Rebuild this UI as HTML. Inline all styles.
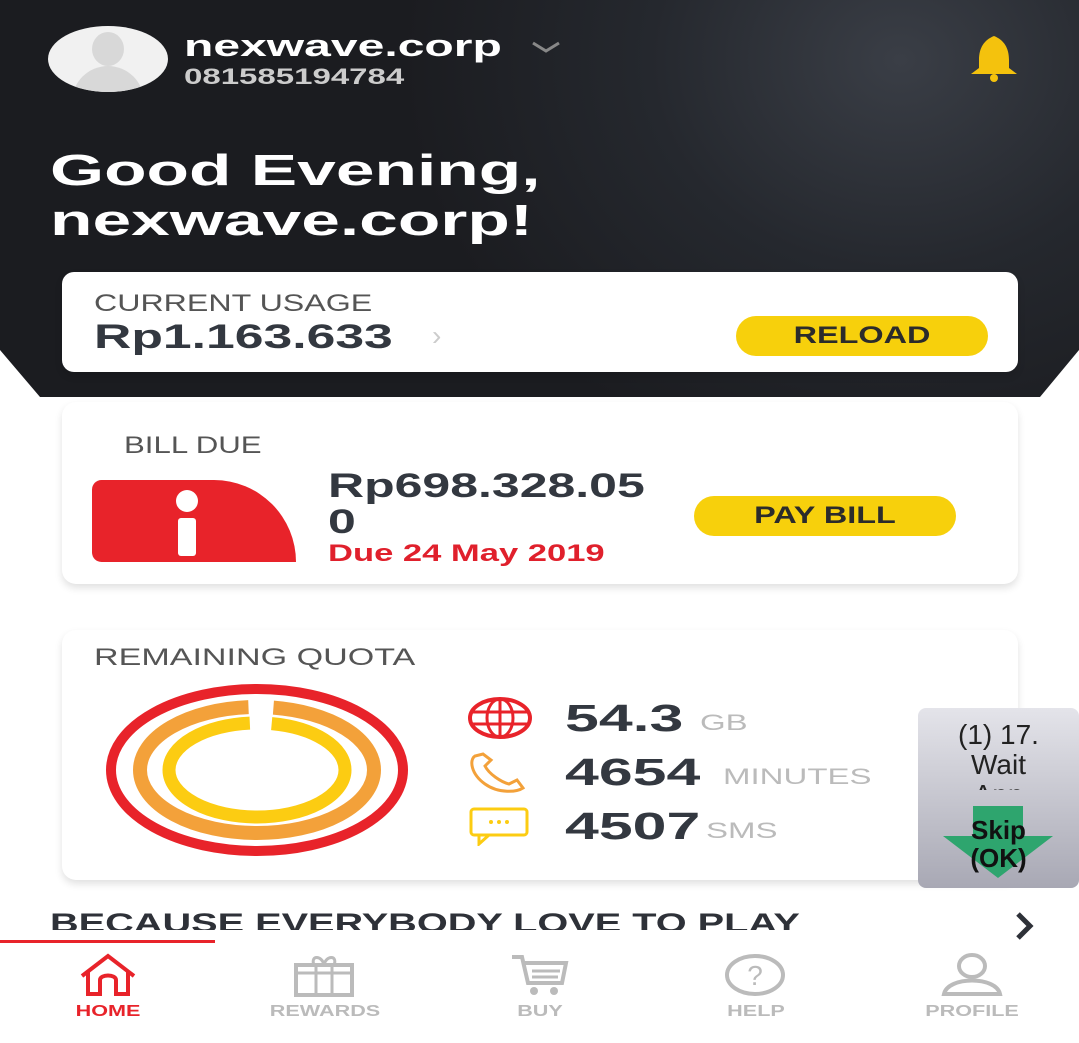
<!DOCTYPE html>
<html><head><meta charset="utf-8"><style>
*{margin:0;padding:0;box-sizing:border-box}
body{width:1079px;height:1043px;background:#fff;font-family:"Liberation Sans",sans-serif;position:relative;overflow:hidden}
.hdr{position:absolute;left:0;top:0;width:1079px;height:397px;background:radial-gradient(ellipse 500px 420px at 900px 60px,#3a3e46 0%,#25282e 50%,#1b1c20 100%);clip-path:polygon(0 0,1079px 0,1079px 350px,1040px 397px,40px 397px,0 350px)}
.abs{position:absolute}
.w{transform:scaleX(1.3);transform-origin:left center;white-space:nowrap}
.wc{transform:scaleX(1.35);transform-origin:center;white-space:nowrap}
.card{position:absolute;background:#fff;border-radius:14px;box-shadow:0 4px 8px rgba(0,0,0,.12)}
.btn{position:absolute;background:#f7d00c;border-radius:22px;font-weight:bold;color:#2b2b2b;font-size:24px;text-align:center}
.lbl{color:#555;font-size:24px}
.big{font-weight:bold;color:#333840}
.unit{font-size:22px;color:#bbb;transform:scaleX(1.5)}
.nav{position:absolute;top:1003px;font-size:16px;font-weight:bold;color:#bbb;text-align:center;width:140px}
</style></head><body>
<div class="hdr"></div>
<div class="abs" style="left:48px;top:26px;width:120px;height:66px;border-radius:50%;background:#f1f1f1;overflow:hidden">
<div class="abs" style="left:44px;top:6px;width:32px;height:34px;border-radius:50%;background:#d8d8d8"></div>
<div class="abs" style="left:24px;top:40px;width:72px;height:40px;border-radius:36px 36px 0 0;background:#d8d8d8"></div></div>
<div class="abs w" style="left:184px;top:28px;color:#fff;font-size:31px;font-weight:bold;transform:scaleX(1.55)">nexwave.corp</div>
<svg class="abs" style="left:530px;top:40px" width="32" height="14"><path d="M3 3 L16 11 L29 3" stroke="#888" stroke-width="3" fill="none"/></svg>
<div class="abs w" style="left:184px;top:64px;color:#ccc;font-size:22px;font-weight:bold;transform:scaleX(1.5)">081585194784</div>
<svg class="abs" style="left:963px;top:34px" width="62" height="48"><path d="M31 2 C21 6 16 14 16 26 L16 34 L8 40 L54 40 L46 34 L46 26 C46 14 41 6 31 2Z" fill="#f4c20d"/><circle cx="31" cy="44" r="4" fill="#f4c20d"/></svg>
<div class="abs w" style="left:50px;top:146px;color:#fff;font-size:44px;font-weight:bold;line-height:50px;transform:scaleX(1.58)">Good Evening,<br>nexwave.corp!</div>
<div class="card" style="left:62px;top:272px;width:956px;height:100px;border-radius:12px">
<div class="lbl abs w" style="left:32px;top:18px;transform:scaleX(1.34)">CURRENT USAGE</div>
<div class="big abs w" style="left:32px;top:46px;font-size:34px;transform:scaleX(1.52)">Rp1.163.633</div>
<div class="abs" style="left:370px;top:48px;color:#ccc;font-size:28px">›</div>
<div class="btn" style="left:674px;top:44px;width:252px;height:40px;line-height:40px"><div class="wc">RELOAD</div></div>
</div>
<div class="card" style="left:62px;top:402px;width:956px;height:182px">
<div class="lbl abs w" style="left:62px;top:30px">BILL DUE</div>
<div class="abs" style="left:30px;top:78px;width:204px;height:82px;background:#e8232a;border-radius:14px 120px 0 14px"></div>
<div class="abs" style="left:114px;top:88px;width:22px;height:22px;border-radius:50%;background:#fff"></div>
<div class="abs" style="left:116px;top:116px;width:18px;height:38px;border-radius:3px;background:#fff"></div>
<div class="big abs w" style="left:266px;top:66px;font-size:34px;line-height:36px;transform:scaleX(1.47)">Rp698.328.05<br>0</div>
<div class="abs w" style="left:266px;top:138px;color:#e0202c;font-size:24px;font-weight:bold;transform:scaleX(1.44)">Due 24 May 2019</div>
<div class="btn" style="left:632px;top:94px;width:262px;height:40px;line-height:40px"><div class="wc">PAY BILL</div></div>
</div>
<div class="card" style="left:62px;top:630px;width:956px;height:250px">
<div class="lbl abs w" style="left:32px;top:14px;transform:scaleX(1.42)">REMAINING QUOTA</div>
</div>
<svg class="abs" style="left:104px;top:684px" width="306" height="172">
<ellipse cx="153" cy="86" rx="146" ry="81" fill="none" stroke="#e8232a" stroke-width="10"/>
<ellipse cx="153" cy="86" rx="117" ry="63" fill="none" stroke="#f3a13a" stroke-width="14" stroke-dasharray="425 25 200"/>
<ellipse cx="153" cy="86" rx="88" ry="47" fill="none" stroke="#fccc12" stroke-width="13" stroke-dasharray="318 22 200"/>
</svg>
<svg class="abs" style="left:467px;top:696px" width="66" height="44"><ellipse cx="33" cy="22" rx="30" ry="19" fill="none" stroke="#e8232a" stroke-width="4"/><ellipse cx="33" cy="22" rx="13" ry="19" fill="none" stroke="#e8232a" stroke-width="3"/><line x1="33" y1="3" x2="33" y2="41" stroke="#e8232a" stroke-width="3"/><line x1="4" y1="16" x2="62" y2="16" stroke="#e8232a" stroke-width="3"/><line x1="4" y1="28" x2="62" y2="28" stroke="#e8232a" stroke-width="3"/></svg>
<svg class="abs" style="left:467px;top:752px" width="64" height="42"><path d="M8 4 C2 8 4 22 18 32 C32 42 50 40 56 36 L50 28 L42 32 C34 30 22 22 18 14 L24 8 L16 2Z" fill="none" stroke="#f3a13a" stroke-width="3"/></svg>
<svg class="abs" style="left:467px;top:806px" width="64" height="40"><rect x="4" y="3" width="56" height="26" rx="3" fill="none" stroke="#fccc12" stroke-width="3"/><path d="M12 29 L12 38 L22 29" fill="none" stroke="#fccc12" stroke-width="3"/><circle cx="24" cy="16" r="2" fill="#fccc12"/><circle cx="32" cy="16" r="2" fill="#fccc12"/><circle cx="40" cy="16" r="2" fill="#fccc12"/></svg>
<div class="big abs w" style="left:565px;top:698px;font-size:38px;transform:scaleX(1.6)">54.3</div>
<div class="abs w unit" style="left:700px;top:710px">GB</div>
<div class="big abs w" style="left:565px;top:752px;font-size:38px;transform:scaleX(1.6)">4654</div>
<div class="abs w unit" style="left:723px;top:764px">MINUTES</div>
<div class="big abs w" style="left:565px;top:806px;font-size:38px;transform:scaleX(1.6)">4507</div>
<div class="abs w unit" style="left:706px;top:818px">SMS</div>
<div class="abs" style="left:918px;top:708px;width:161px;height:180px;border-radius:8px;background:linear-gradient(#e4e4ea,#a8a8b4);overflow:hidden">
<svg class="abs" style="left:20px;top:98px" width="120" height="74"><path d="M35 0 L85 0 L85 30 L115 30 L60 72 L5 30 L35 30Z" fill="#2ea56e"/></svg>
<div class="abs" style="left:0;top:12px;width:161px;text-align:center;font-size:28px;line-height:30px;color:#222;height:70px;overflow:hidden">(1) 17.<br>Wait<br>App</div>
<div class="abs" style="left:0;top:108px;width:161px;text-align:center;font-size:26px;line-height:28px;font-weight:bold;color:#111">Skip<br>(OK)</div>
</div>
<div class="abs w" style="left:50px;top:908px;font-size:27px;font-weight:bold;color:#2e3138;transform:scaleX(1.47)">BECAUSE EVERYBODY LOVE TO PLAY</div>
<div class="abs" style="left:0;top:930px;width:1079px;height:12px;background:#fff"></div>
<svg class="abs" style="left:1012px;top:910px" width="24" height="32"><path d="M6 4 L18 16 L6 28" stroke="#2e3138" stroke-width="5" fill="none"/></svg>
<div class="abs" style="left:0;top:940px;width:215px;height:3px;background:#e8232a"></div>
<svg class="abs" style="left:76px;top:952px" width="64" height="46"><path d="M6 24 L32 4 L58 24 M12 20 L12 42 L24 42 L24 28 C24 22 40 22 40 28 L40 42 L52 42 L52 20" stroke="#e8232a" stroke-width="4" fill="none"/></svg>
<svg class="abs" style="left:292px;top:953px" width="64" height="44"><rect x="4" y="12" width="56" height="30" fill="none" stroke="#bbb" stroke-width="4"/><line x1="4" y1="20" x2="60" y2="20" stroke="#bbb" stroke-width="3"/><line x1="24" y1="12" x2="24" y2="42" stroke="#bbb" stroke-width="3"/><line x1="40" y1="12" x2="40" y2="42" stroke="#bbb" stroke-width="3"/><path d="M22 12 C18 2 30 2 32 12 C34 2 46 2 42 12" fill="none" stroke="#bbb" stroke-width="3"/></svg>
<svg class="abs" style="left:510px;top:953px" width="60" height="44"><path d="M2 4 L12 4 L18 30 L52 30 L56 10 L14 10" fill="none" stroke="#bbb" stroke-width="4"/><line x1="22" y1="18" x2="50" y2="18" stroke="#bbb" stroke-width="3"/><line x1="22" y1="24" x2="48" y2="24" stroke="#bbb" stroke-width="3"/><circle cx="24" cy="38" r="4" fill="#bbb"/><circle cx="44" cy="38" r="4" fill="#bbb"/></svg>
<svg class="abs" style="left:724px;top:953px" width="62" height="44"><ellipse cx="31" cy="22" rx="28" ry="19" fill="none" stroke="#bbb" stroke-width="4"/><text x="31" y="32" text-anchor="middle" font-size="28" font-family="Liberation Sans" fill="#bbb">?</text></svg>
<svg class="abs" style="left:940px;top:952px" width="64" height="46"><ellipse cx="32" cy="14" rx="13" ry="11" fill="none" stroke="#bbb" stroke-width="4"/><path d="M4 42 C8 24 56 24 60 42Z" fill="none" stroke="#bbb" stroke-width="4"/></svg>
<div class="nav" style="left:38px;color:#e8232a"><div class="wc">HOME</div></div>
<div class="nav" style="left:255px"><div class="wc">REWARDS</div></div>
<div class="nav" style="left:470px"><div class="wc">BUY</div></div>
<div class="nav" style="left:686px"><div class="wc">HELP</div></div>
<div class="nav" style="left:902px"><div class="wc">PROFILE</div></div>
</body></html>
